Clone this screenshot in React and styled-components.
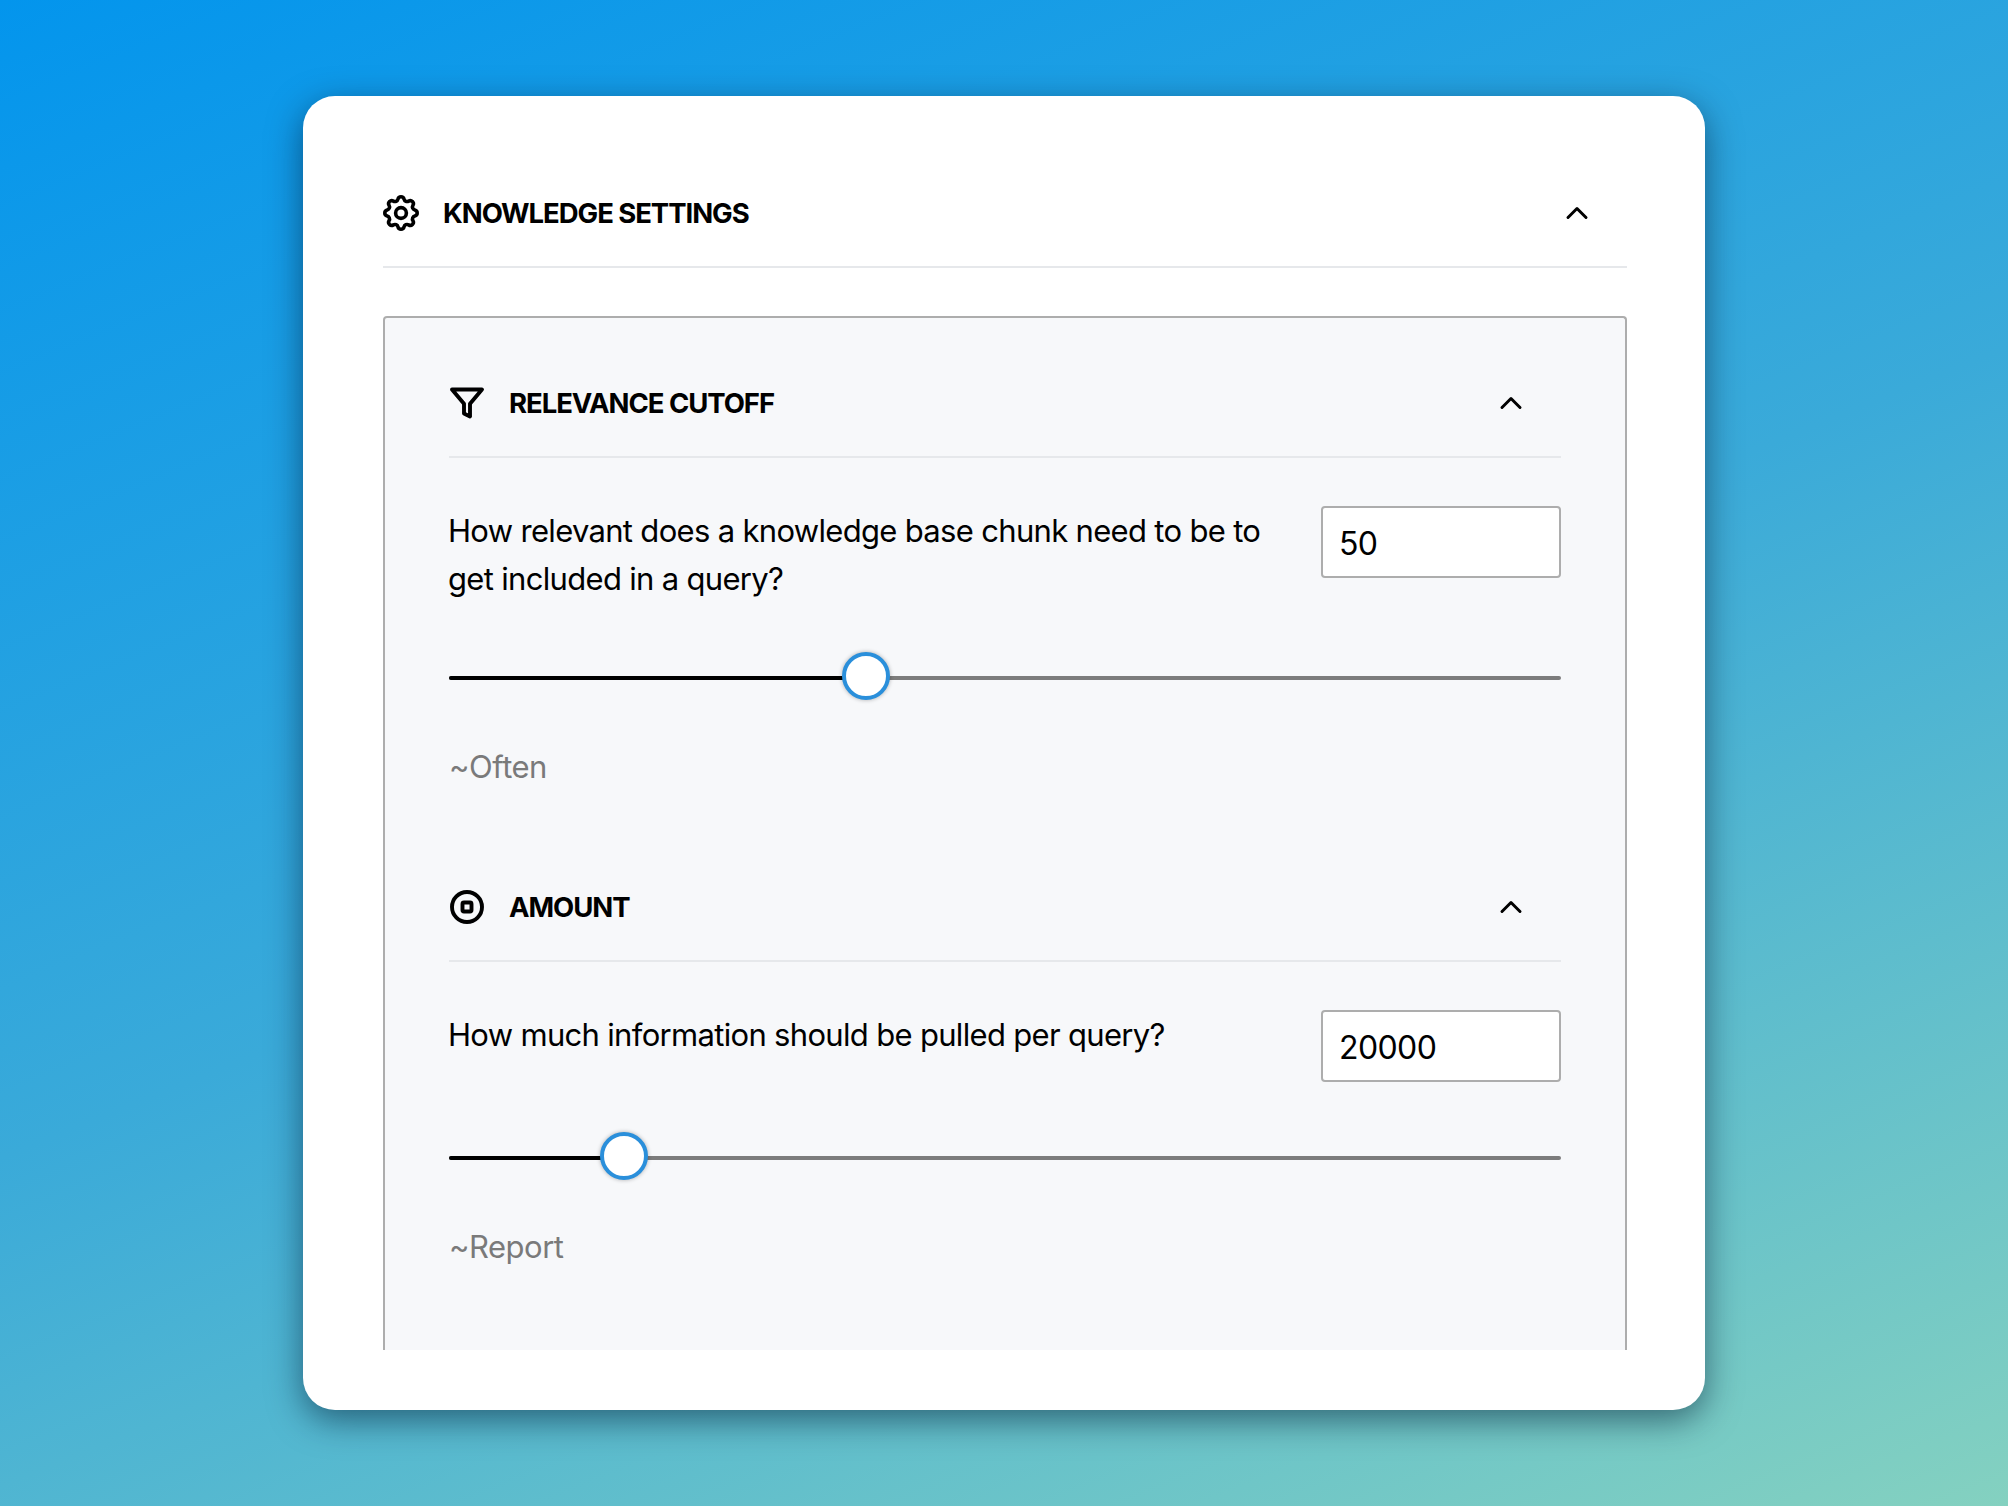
import React from "react";
import styled, { createGlobalStyle } from "styled-components";
import { ChevronUp, CircleStop } from "lucide-react";
import { FiFilter } from "react-icons/fi";
import { TbSettings } from "react-icons/tb";

const GlobalStyle = createGlobalStyle`
  html, body {
    margin: 0;
    padding: 0;
  }
  body {
    font-family: Inter, "Liberation Sans", sans-serif;
    color: #000;
  }
  * {
    box-sizing: border-box;
  }
`;

const Page = styled.div`
  width: 2008px;
  height: 1506px;
  padding-top: 96px;
  overflow: hidden;
  background: linear-gradient(158deg, #0395ed 0%, #3aaad9 50%, #84d1c0 100%);
`;

const Card = styled.div`
  width: 1402px;
  height: 1314px;
  margin: 0 auto;
  padding: 64px 78px 60px 80px;
  display: flex;
  flex-direction: column;
  background: #fff;
  border-radius: 32px;
  box-shadow: 0 10px 34px rgba(0, 25, 50, 0.55);
`;

const Header = styled.div`
  display: flex;
  align-items: center;
  gap: 24px;
  flex: none;
  height: 108px;
  padding-right: 32px;
  border-bottom: 2px solid #e6e8eb;
  svg {
    flex: none;
    display: block;
  }
`;

const Title = styled.div`
  flex: 1;
  font-size: 27.5px;
  font-weight: 700;
  letter-spacing: -1.05px;
  text-transform: uppercase;
`;

const Box = styled.div`
  flex: 1;
  min-height: 0;
  margin-top: 48px;
  padding: 0 64px;
  overflow: hidden;
  background: #f7f8fa;
  border: 2px solid #adadad;
  border-bottom: none;
  border-radius: 4px 4px 0 0;
`;

const Section = styled.section`
  padding-top: 32px;
  & + & {
    padding-top: 67px;
  }
`;

const Prompt = styled.div`
  display: flex;
  justify-content: space-between;
  align-items: flex-start;
  gap: 48px;
  margin-top: 48px;
`;

const Question = styled.p`
  margin: 1px 0 -1px -1px;
  width: 830px;
  font-size: 31px;
  line-height: 48px;
  letter-spacing: -0.68px;
`;

const NumberInput = styled.input`
  flex: none;
  width: 240px;
  height: 72px;
  padding: 2px 16px 0;
  font-family: inherit;
  font-size: 32px;
  letter-spacing: -0.6px;
  color: #000;
  background: #fff;
  border: 2px solid #adadad;
  border-radius: 4px;
  outline: none;
`;

const Track = styled.div`
  position: relative;
  height: 4px;
  margin-top: 74px;
  background: #7c7c7c;
  border-radius: 2px;
`;

const Fill = styled.div`
  height: 100%;
  background: #000;
  border-radius: 2px;
`;

const Thumb = styled.div`
  position: absolute;
  top: -24px;
  width: 48px;
  height: 48px;
  margin-left: -24px;
  background: #fff;
  border: 4px solid #2a8fdb;
  border-radius: 50%;
  box-shadow: 0 0 4px rgba(0, 0, 0, 0.3);
`;

const Hint = styled.div`
  margin-top: 67px;
  font-size: 31px;
  line-height: 40px;
  letter-spacing: -0.5px;
  color: #7a7a7a;
`;

const sections = [
  {
    title: "Relevance Cutoff",
    icon: <FiFilter size={36} strokeWidth={2.6} />,
    question:
      "How relevant does a knowledge base chunk need to be to get included in a query?",
    value: "50",
    percent: 37.5,
    hint: "~Often",
  },
  {
    title: "Amount",
    icon: <CircleStop size={36} strokeWidth={2.6} />,
    question: "How much information should be pulled per query?",
    value: "20000",
    percent: 15.74,
    hint: "~Report",
  },
];

export default function App() {
  return (
    <Page>
      <GlobalStyle />
      <Card>
        <Header>
          <TbSettings size={36} viewBox="2 2 20 20" />
          <Title>Knowledge Settings</Title>
          <ChevronUp size={36} />
        </Header>
        <Box>
          {sections.map((s) => (
            <Section key={s.title}>
              <Header>
                {s.icon}
                <Title>{s.title}</Title>
                <ChevronUp size={36} />
              </Header>
              <Prompt>
                <Question>{s.question}</Question>
                <NumberInput readOnly value={s.value} />
              </Prompt>
              <Track>
                <Fill style={{ width: `${s.percent}%` }} />
                <Thumb style={{ left: `${s.percent}%` }} />
              </Track>
              <Hint>{s.hint}</Hint>
            </Section>
          ))}
        </Box>
      </Card>
    </Page>
  );
}
